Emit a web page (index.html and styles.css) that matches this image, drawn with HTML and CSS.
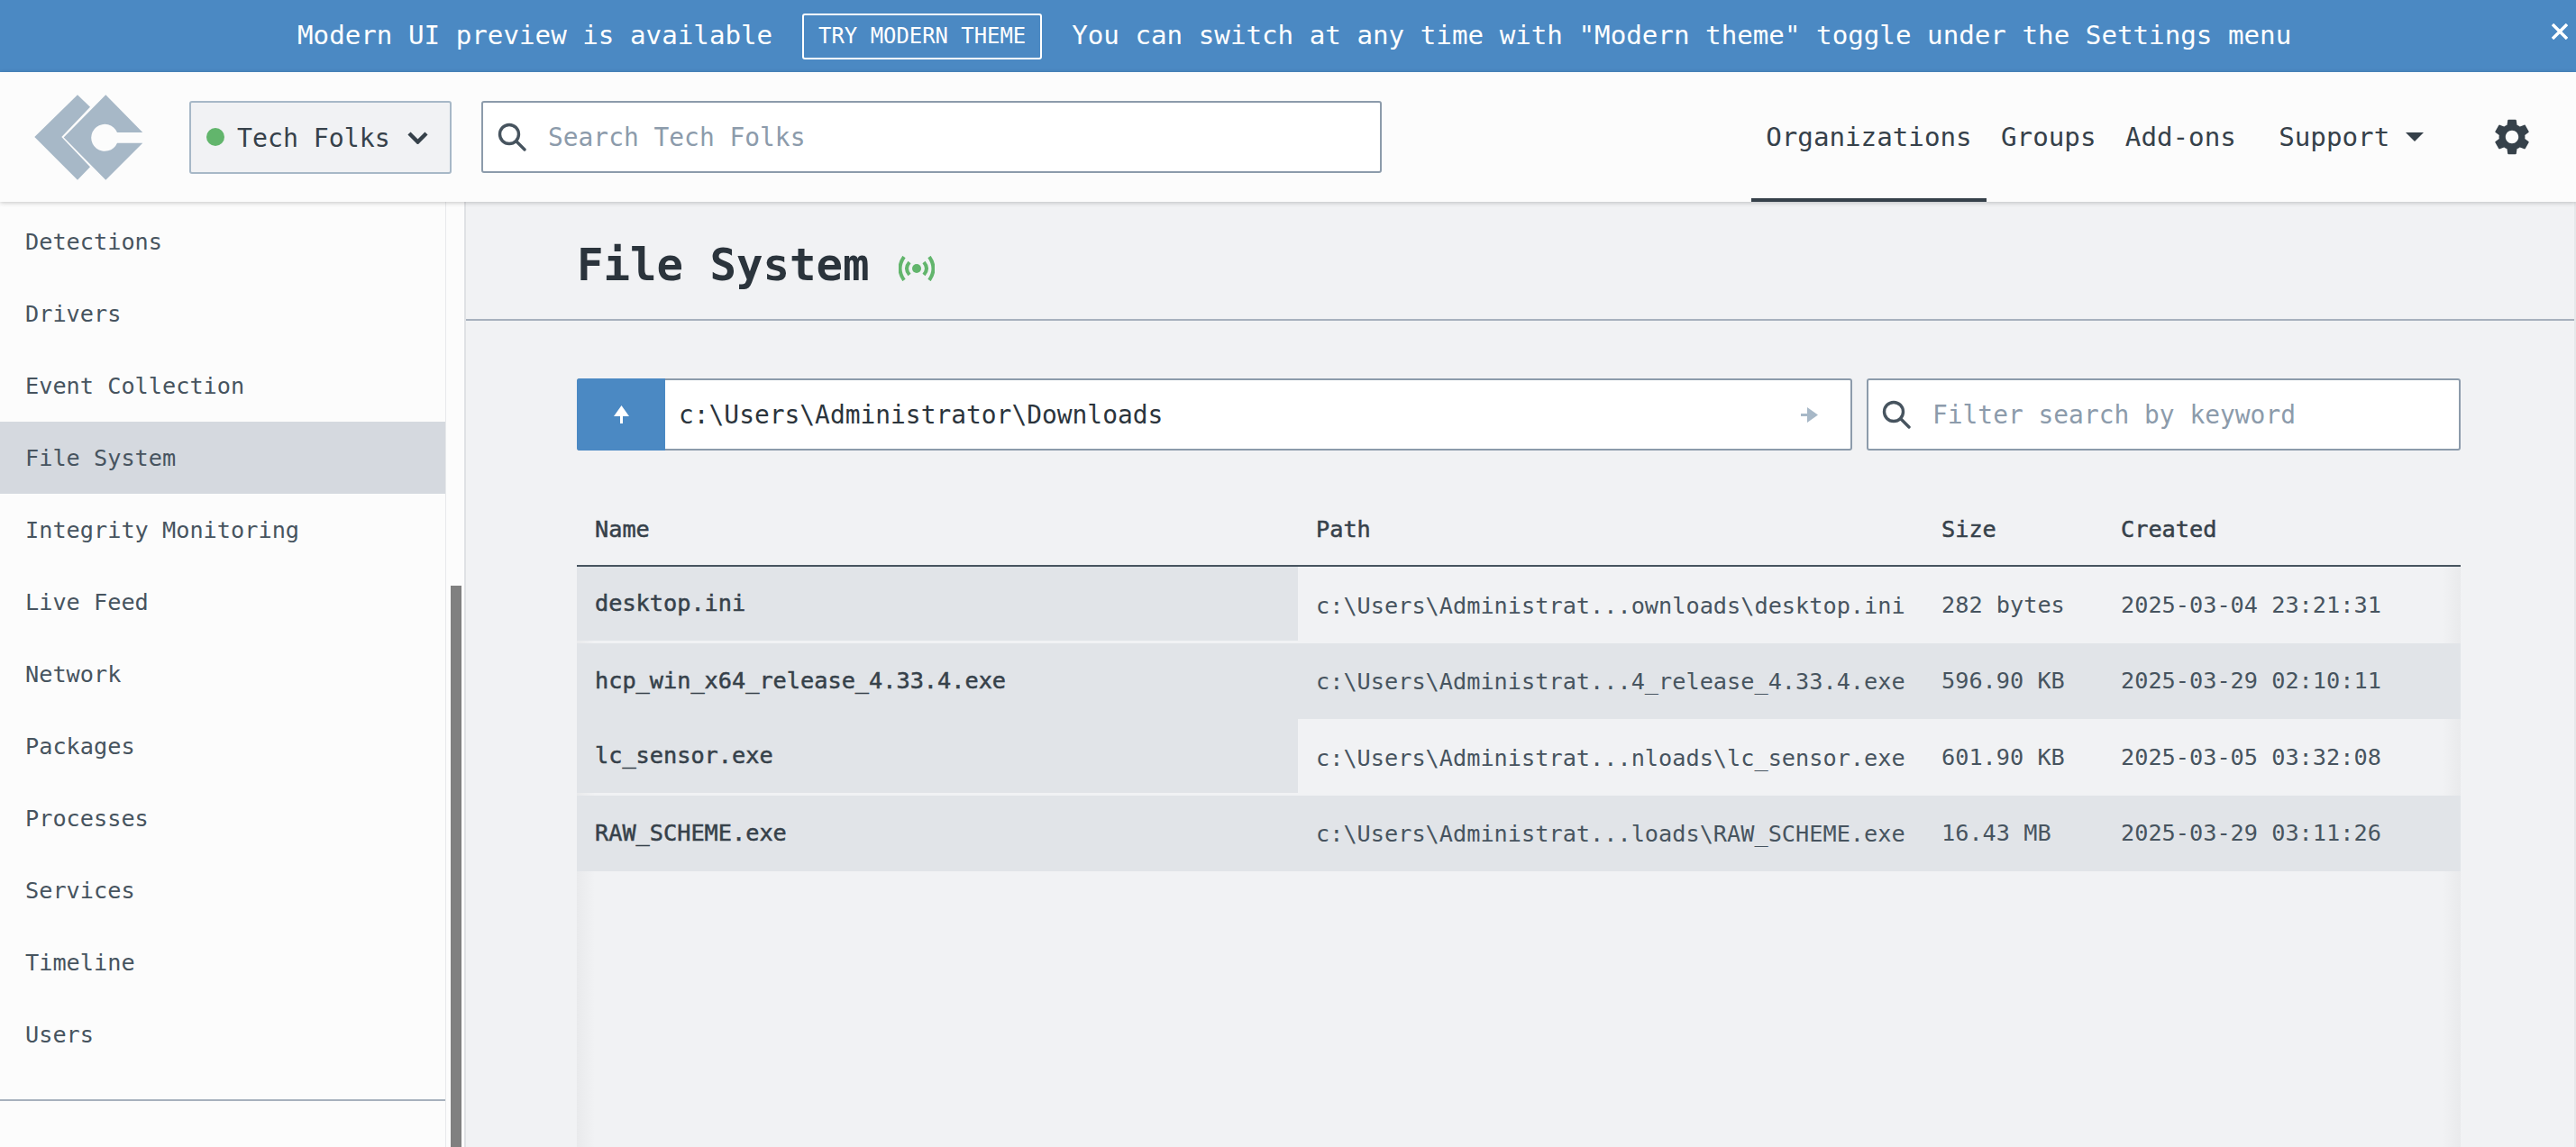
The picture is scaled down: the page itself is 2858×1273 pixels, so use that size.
FILE: index.html
```html
<!DOCTYPE html>
<html lang="en">
<head>
  <meta charset="UTF-8" />
  <meta name="viewport" content="width=device-width, initial-scale=1.0" />
  <title>File System</title>
  <link rel="stylesheet" href="styles.css">
</head>
<body>
  <div class="banner">
    <span>Modern UI preview is available</span>
    <button class="banner-btn" type="button">TRY MODERN THEME</button>
    <span>You can switch at any time with "Modern theme" toggle under the Settings menu</span>
    <svg class="banner-close" width="18" height="18" viewBox="0 0 18 18"><path d="M1 1 17 17M17 1 1 17" fill="none" stroke="#fff" stroke-width="3.4"/></svg>
  </div>

  <header class="topbar">
    <svg class="logo" width="121" height="95" viewBox="38 103 121 95">
      <path d="M86 103.3 38.3 150 86 197.7 100 183.3 68.3 150 100 116.7Z" fill="#a7b8c7"/>
      <path d="M117.3 103.3 158.3 145H130A15 15 0 1 0 130 156.7H158.3L117.3 197.7 70.7 150.5Z" fill="#a7b8c7"/>
    </svg>
    <div class="org-select">
      <span class="org-dot"></span>
      <span>Tech Folks</span>
      <svg width="23" height="14" viewBox="0 0 23 14"><path d="M2 2 11.5 11.5 21 2" fill="none" stroke="#36414a" stroke-width="4.4"/></svg>
    </div>
    <div class="field top-search">
      <svg class="search-icon" width="32" height="32" viewBox="0 0 32 32"><circle cx="13" cy="13" r="10.5" fill="none" stroke="#47545f" stroke-width="3.4"/><path d="M21 21 30 30" stroke="#47545f" stroke-width="3.4" stroke-linecap="round"/></svg>
      <span class="placeholder">Search Tech Folks</span>
    </div>
    <nav class="topnav">
      <a class="tab active">Organizations</a>
      <a class="tab">Groups</a>
      <a class="tab">Add-ons</a>
      <a class="tab support">Support <svg width="20" height="10" viewBox="0 0 20 10"><path d="M0 0H20L10 10Z" fill="#36414a"/></svg></a>
    </nav>
    <svg class="gear" width="48" height="48" viewBox="0 0 24 24"><path fill="#36414a" d="M19.14 12.94c.04-.3.06-.61.06-.94 0-.32-.02-.64-.07-.94l2.03-1.58c.18-.14.23-.41.12-.61l-1.92-3.32c-.12-.22-.37-.29-.59-.22l-2.39.96c-.5-.38-1.03-.7-1.62-.94l-.36-2.54c-.04-.24-.24-.41-.48-.41h-3.84c-.24 0-.43.17-.47.41l-.36 2.54c-.59.24-1.13.57-1.62.94l-2.39-.96c-.22-.08-.47 0-.59.22L2.74 8.87c-.12.21-.08.47.12.61l2.03 1.58c-.05.3-.09.63-.09.94s.02.64.07.94l-2.03 1.58c-.18.14-.23.41-.12.61l1.92 3.32c.12.22.37.29.59.22l2.39-.96c.5.38 1.03.7 1.62.94l.36 2.54c.05.24.24.41.48.41h3.84c.24 0 .44-.17.47-.41l.36-2.54c.59-.24 1.13-.56 1.62-.94l2.39.96c.22.08.47 0 .59-.22l1.92-3.32c.12-.22.07-.47-.12-.61l-2.01-1.58zM12 15.6c-1.98 0-3.6-1.62-3.6-3.6s1.62-3.6 3.6-3.6 3.6 1.62 3.6 3.6-1.62 3.6-3.6 3.6z"/></svg>
  </header>

  <div class="layout">
    <aside class="sidebar">
      <div class="side-inner">
        <ul class="side-list">
          <li>Detections</li>
          <li>Drivers</li>
          <li>Event Collection</li>
          <li class="current">File System</li>
          <li>Integrity Monitoring</li>
          <li>Live Feed</li>
          <li>Network</li>
          <li>Packages</li>
          <li>Processes</li>
          <li>Services</li>
          <li>Timeline</li>
          <li>Users</li>
        </ul>
      </div>
      <div class="side-thumb"></div>
    </aside>

    <main class="content">
      <div class="page-head">
        <h1>File System</h1>
        <svg class="live-icon" width="40" height="28" viewBox="0 0 40 28" fill="none" stroke="#62b56c" stroke-width="4">
          <circle cx="20" cy="14" r="5" fill="#62b56c" stroke="none"/>
          <path d="M12 7Q6 14 12 21M28 7Q34 14 28 21"/>
          <path d="M6 1Q-3 14 6 27M34 1Q43 14 34 27"/>
        </svg>
      </div>

      <div class="page-body">
        <div class="toolbar">
          <div class="path-bar">
            <div class="path-up"><svg width="17" height="20" viewBox="0 0 17 20"><path d="M8.5 0 17 12H10V20H7V12H0Z" fill="#fff"/></svg></div>
            <div class="path-value">
              <span>c:\Users\Administrator\Downloads</span>
              <svg width="19" height="17" viewBox="0 0 19 17"><path d="M19 8.5 7 0V7H0V10H7V17Z" fill="#a7b8c7"/></svg>
            </div>
          </div>
          <div class="field filter">
            <svg class="search-icon" width="32" height="32" viewBox="0 0 32 32"><circle cx="13" cy="13" r="10.5" fill="none" stroke="#47545f" stroke-width="3.4"/><path d="M21 21 30 30" stroke="#47545f" stroke-width="3.4" stroke-linecap="round"/></svg>
            <span class="placeholder">Filter search by keyword</span>
          </div>
        </div>

        <div class="table-wrap">
          <table class="files">
            <colgroup>
              <col class="col-name"><col class="col-path"><col class="col-size"><col class="col-created">
            </colgroup>
            <thead>
              <tr><th>Name</th><th>Path</th><th>Size</th><th>Created</th></tr>
            </thead>
            <tbody>
              <tr>
                <td class="name">desktop.ini</td>
                <td class="path">c:\Users\Administrat...ownloads\desktop.ini</td>
                <td>282 bytes</td>
                <td>2025-03-04 23:21:31</td>
              </tr>
              <tr>
                <td class="name">hcp_win_x64_release_4.33.4.exe</td>
                <td class="path">c:\Users\Administrat...4_release_4.33.4.exe</td>
                <td>596.90 KB</td>
                <td>2025-03-29 02:10:11</td>
              </tr>
              <tr>
                <td class="name">lc_sensor.exe</td>
                <td class="path">c:\Users\Administrat...nloads\lc_sensor.exe</td>
                <td>601.90 KB</td>
                <td>2025-03-05 03:32:08</td>
              </tr>
              <tr>
                <td class="name">RAW_SCHEME.exe</td>
                <td class="path">c:\Users\Administrat...loads\RAW_SCHEME.exe</td>
                <td>16.43 MB</td>
                <td>2025-03-29 03:11:26</td>
              </tr>
            </tbody>
          </table>
        </div>
      </div>
    </main>
  </div>
</body>
</html>
```

FILE: styles.css
```css
html, body { height: 100%; }
body { margin: 0; display: flex; flex-direction: column; overflow: hidden; background: #f1f2f4; color: #2b343c; font-family: "DejaVu Sans Mono", "Liberation Mono", monospace; }

.banner { height: 80px; box-sizing: border-box; flex: none; display: flex; align-items: center; padding: 0 0 2px 330px; background: #4b89c3; color: #fff; font-size: 29.2px; position: relative; }
.banner-btn { height: 51px; width: 266px; margin: 2px 33px 0 33px; padding: 0; border: 2px solid #fff; border-radius: 3px; background: none; color: #fff; font: inherit; font-size: 23.9px; }
.banner-close { position: absolute; right: 9px; top: 26px; }

.topbar { height: 144px; flex: none; display: flex; align-items: center; background: #fcfcfc; padding-left: 38px; box-shadow: 0 1px 5px rgba(0, 0, 0, .22); position: relative; z-index: 2; }
.logo { flex: none; margin-right: 51px; }
.org-select { width: 291px; height: 81px; box-sizing: border-box; display: flex; align-items: center; padding: 2px 0 0 17px; border: 2px solid #a7b8c7; border-radius: 3px; background: #f1f2f4; color: #36414a; font-size: 28.2px; }
.org-select span + span { margin: 0 19px 0 14px; }
.org-dot { width: 20px; height: 20px; margin-top: -2px; border-radius: 50%; background: #62b56c; }

.field { box-sizing: border-box; height: 80px; display: flex; align-items: center; border: 2px solid #8c9bab; border-radius: 3px; background: #fff; font-size: 27.9px; }
.placeholder { color: #8c9bab; }
.search-icon { flex: none; }
.top-search { width: 999px; margin-left: 33px; padding-left: 16px; }
.top-search .search-icon { margin-right: 24px; }

.topnav { display: flex; align-self: stretch; margin-left: 410px; font-size: 29.2px; color: #36414a; }
.tab { display: flex; align-items: center; padding: 4px 16.2px 0; border-bottom: 4px solid transparent; box-sizing: border-box; }
.tab.active { border-bottom-color: #36414a; }
.support { margin-left: 15px; white-space: pre; }
.gear { margin-left: 58px; flex: none; }

.layout { flex: 1; min-height: 0; display: flex; }

.sidebar { width: 515px; flex: none; border-right: 2px solid #dfe1e4; background: #fcfcfc; position: relative; }
.side-inner { width: 495px; height: 100%; box-sizing: border-box; padding-top: 4px; border-right: 1px solid #e8e9eb; }
.side-list { list-style: none; margin: 0; padding: 0 0 32px; border-bottom: 2px solid #a7b1bd; font-size: 25.25px; color: #47545f; }
.side-list li { height: 80px; padding-left: 28px; display: flex; align-items: center; }
.side-list li.current { background: #d5d9df; }
.side-thumb { position: absolute; left: 500px; top: 426px; bottom: 0; width: 12px; background: #808080; }

.content { flex: 1; min-width: 0; border-right: 2px solid #e6e8ea; display: flex; flex-direction: column; }
.page-head { flex: none; box-sizing: border-box; height: 132px; display: flex; align-items: center; gap: 32px; padding: 10px 0 0 123px; border-bottom: 2px solid #a7b1bd; }
.page-head h1 { margin: 0; font-size: 49px; font-weight: bold; color: #2b343c; }
.live-icon { margin-top: 8px; }

.page-body { flex: 1; min-height: 0; display: flex; flex-direction: column; padding: 64px 126px 0 123px; }
.toolbar { display: flex; gap: 16px; flex: none; }
.path-bar { width: 1415px; height: 80px; box-sizing: border-box; display: flex; border: 2px solid #8c9bab; border-radius: 3px; background: #fff; font-size: 27.9px; color: #2b343c; }
.path-up { width: 98px; margin: -2px 0 -2px -2px; flex: none; display: flex; align-items: center; justify-content: center; background: #4b89c3; border-radius: 3px 0 0 3px; }
.path-value { flex: 1; display: flex; align-items: center; justify-content: space-between; padding: 0 36px 0 15px; }
.filter { flex: 1; padding-left: 15px; }
.filter .search-icon { margin-right: 24px; }

.table-wrap { flex: 1; margin-top: 40px; background:
  linear-gradient(to right, #e9eaec, rgba(233, 234, 236, 0)) 0 89px / 20px 100% no-repeat,
  linear-gradient(to left, #e9eaec, rgba(233, 234, 236, 0)) 100% 89px / 20px 100% no-repeat; }
.files { width: 100%; table-layout: fixed; border-collapse: separate; border-spacing: 0; font-size: 25.25px; color: #47545f; }
.col-name { width: 800px; }
.col-path { width: 694px; }
.col-size { width: 199px; }
.files th { height: 89px; padding: 8px 0 0 20px; box-sizing: border-box; text-align: left; font-weight: normal; color: #36414a; border-bottom: 2px solid #47545f; -webkit-text-stroke: .5px #36414a; }
.files td { height: 84.5px; padding: 0 0 0 20px; box-sizing: border-box; white-space: nowrap; overflow: hidden; }
.files tbody tr:nth-child(even) td { background: #e1e4e8; }
.files td.name { background: #e1e4e8 padding-box; border-bottom: 3px solid transparent; color: #36414a; -webkit-text-stroke: .5px #36414a; }
.files tbody tr:nth-child(even) td.name { border-bottom: 0; }
.files td.path { padding-top: 2px; }
```
